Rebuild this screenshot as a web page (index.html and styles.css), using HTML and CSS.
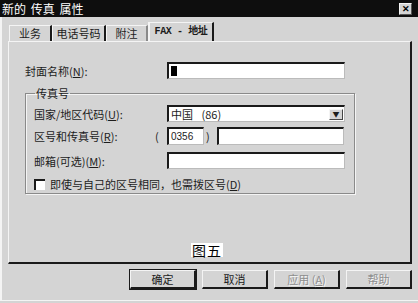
FILE: index.html
```html
<!DOCTYPE html>
<html lang="zh-CN">
<head>
    <meta charset="UTF-8">
    <title>新的 传真 属性</title>
    <link rel="stylesheet" href="styles.css">
</head>
<body>
    <div class="dialog">
        <div class="titlebar">
            <span class="title">新的 传真 属性</span>
            <span class="close">✕</span>
        </div>

        <div class="tabs">
            <span class="tab t1">业务</span>
            <span class="tab t2">电话号码</span>
            <span class="tab t3">附注</span>
            <span class="tab active">FAX - 地址</span>
        </div>

        <div class="panel">
            <div class="row cover">
                <label class="label">封面名称(<u>N</u>):</label>
                <div class="field"><span class="caret"></span></div>
            </div>

            <fieldset class="group">
                <legend>传真号</legend>
                <div class="row country">
                    <label class="label">国家/地区代码(<u>U</u>):</label>
                    <div class="field select">
                        <span class="value">中国 (86)</span>
                        <span class="arrow">▼</span>
                    </div>
                </div>
                <div class="row area">
                    <label class="label">区号和传真号(<u>R</u>):</label>
                    <span class="paren">(</span>
                    <div class="field code">0356</div>
                    <span class="paren">)</span>
                    <div class="field number"></div>
                </div>
                <div class="row mail">
                    <label class="label">邮箱(可选)(<u>M</u>):</label>
                    <div class="field"></div>
                </div>
                <div class="check">
                    <span class="box"></span>
                    <span>即使与自己的区号相同，也需拨区号(<u>D</u>)</span>
                </div>
            </fieldset>

            <div class="caption">图五</div>
        </div>

        <div class="footer">
            <button class="btn default">确定</button>
            <button class="btn">取消</button>
            <button class="btn" disabled>应用 (<u>A</u>)</button>
            <button class="btn" disabled>帮助</button>
        </div>
    </div>
</body>
</html>
```

FILE: styles.css
```css
:root {
    --face: #d4d4d4;
    --light: #f4f4f4;
    --shadow: #8a8a8a;
    --dark: #1a1a1a;
    --text: #1c1c1c;
}

* {
    box-sizing: border-box;
}

body {
    margin: 0;
    background: var(--face);
    font-family: "Noto Sans CJK SC", "Liberation Sans", sans-serif;
    font-size: 11px;
    color: var(--text);
}

.dialog {
    width: 418px;
    height: 301px;
    border-left: 2px solid var(--light);
    border-bottom: 1px solid var(--light);
    display: flex;
    flex-direction: column;
}

/* title bar */

.titlebar {
    height: 17px;
    background: #0e0e0e;
    color: #fff;
    display: flex;
    align-items: center;
    justify-content: space-between;
    padding: 0 6px 0 2px;
    margin-left: -2px;
    font-size: 12px;
}

.title {
    word-spacing: 2px;
}

.close {
    width: 13px;
    height: 12px;
    background: var(--face);
    color: #000;
    font-size: 9px;
    font-weight: bold;
    line-height: 10px;
    text-align: center;
    border: 1px solid var(--light);
    border-right-color: #555;
    border-bottom-color: #555;
}

/* tabs */

.tabs {
    display: flex;
    align-items: flex-end;
    height: 24px;
    padding-left: 7px;
}

.tab {
    height: 16px;
    line-height: 14px;
    text-align: center;
    border-left: 1px solid var(--light);
    border-top: 1px solid var(--light);
    border-right: 2px solid var(--dark);
}

.t1 { width: 43px; }
.t2 { width: 54px; }
.t3 { width: 42px; border-right-color: var(--shadow); }

.tab.active {
    width: 66px;
    height: 19px;
    border-left: 2px solid var(--light);
    font-family: "Liberation Mono", "Noto Sans CJK SC", monospace;
    font-size: 10px;
    line-height: 17px;
    font-weight: bold;
    letter-spacing: -0.4px;
}

/* page */

.panel {
    height: 223px;
    margin: 0 6px;
    border-top: 1px solid var(--light);
    border-left: 1px solid var(--light);
    border-right: 2px solid var(--dark);
    border-bottom: 2px solid var(--dark);
    padding: 20px 0 0 16px;
    display: flex;
    flex-direction: column;
}

.row {
    display: flex;
    align-items: center;
    height: 17px;
}

.label {
    width: 142px;
}

.field {
    height: 17px;
    width: 178px;
    background: #fff;
    border-top: 2px solid var(--dark);
    border-left: 2px solid var(--dark);
    border-right: 1px solid #bbb;
    border-bottom: 1px solid #bbb;
    display: flex;
    align-items: center;
    padding-left: 2px;
}

.caret {
    width: 6px;
    height: 10px;
    background: #000;
}

.group {
    margin: 7px 0 0;
    width: 330px;
    border: 1px solid var(--shadow);
    box-shadow: 1px 1px 0 var(--light), inset 1px 1px 0 var(--light);
    padding: 0 0 3px 8px;
}

.group legend {
    padding: 0 1px;
    margin-left: 1px;
    line-height: 14px;
}

.group .label {
    width: 133px;
}

.country {
    margin-top: 5px;
}

.select {
    justify-content: space-between;
    padding-right: 1px;
}

.value {
    word-spacing: 6px;
}

.arrow {
    width: 14px;
    height: 11px;
    background: var(--face);
    border: 1px solid var(--light);
    border-right-color: #444;
    border-bottom-color: #444;
    font-size: 7px;
    line-height: 9px;
    text-align: center;
}

.area {
    margin-top: 5px;
    height: 18px;
}

.area .label {
    width: 121px;
}

.area .field {
    height: 18px;
}

.paren {
    width: 12px;
}

.code + .paren {
    width: 13px;
    padding-left: 2px;
}

.field.code {
    width: 37px;
    font-size: 10px;
    font-family: "Liberation Sans", sans-serif;
}

.field.number {
    width: 127px;
}

.mail {
    margin-top: 7px;
}

.check {
    display: flex;
    align-items: center;
    gap: 5px;
    height: 12px;
    margin-top: 9px;
}

.box {
    width: 11px;
    height: 11px;
    background: #fff;
    border-top: 2px solid var(--dark);
    border-left: 2px solid var(--dark);
}

.caption {
    align-self: flex-start;
    margin: auto 0 5px 166px;
    background: #fff;
    color: #000;
    font-size: 14px;
    line-height: 14px;
    padding: 0 1px;
    letter-spacing: 1px;
}

/* buttons */

.footer {
    display: flex;
    justify-content: flex-end;
    gap: 6px;
    padding: 6px 6px 0 0;
}

.btn {
    width: 66px;
    height: 19px;
    font: inherit;
    color: var(--text);
    background: var(--face);
    border: 1px solid var(--light);
    border-right: 2px solid var(--dark);
    border-bottom: 2px solid var(--dark);
    padding: 0;
}

.btn.default {
    outline: 1px solid var(--dark);
}

.btn:disabled {
    color: #8e8e8e;
    text-shadow: 1px 1px 0 var(--light);
}
```
